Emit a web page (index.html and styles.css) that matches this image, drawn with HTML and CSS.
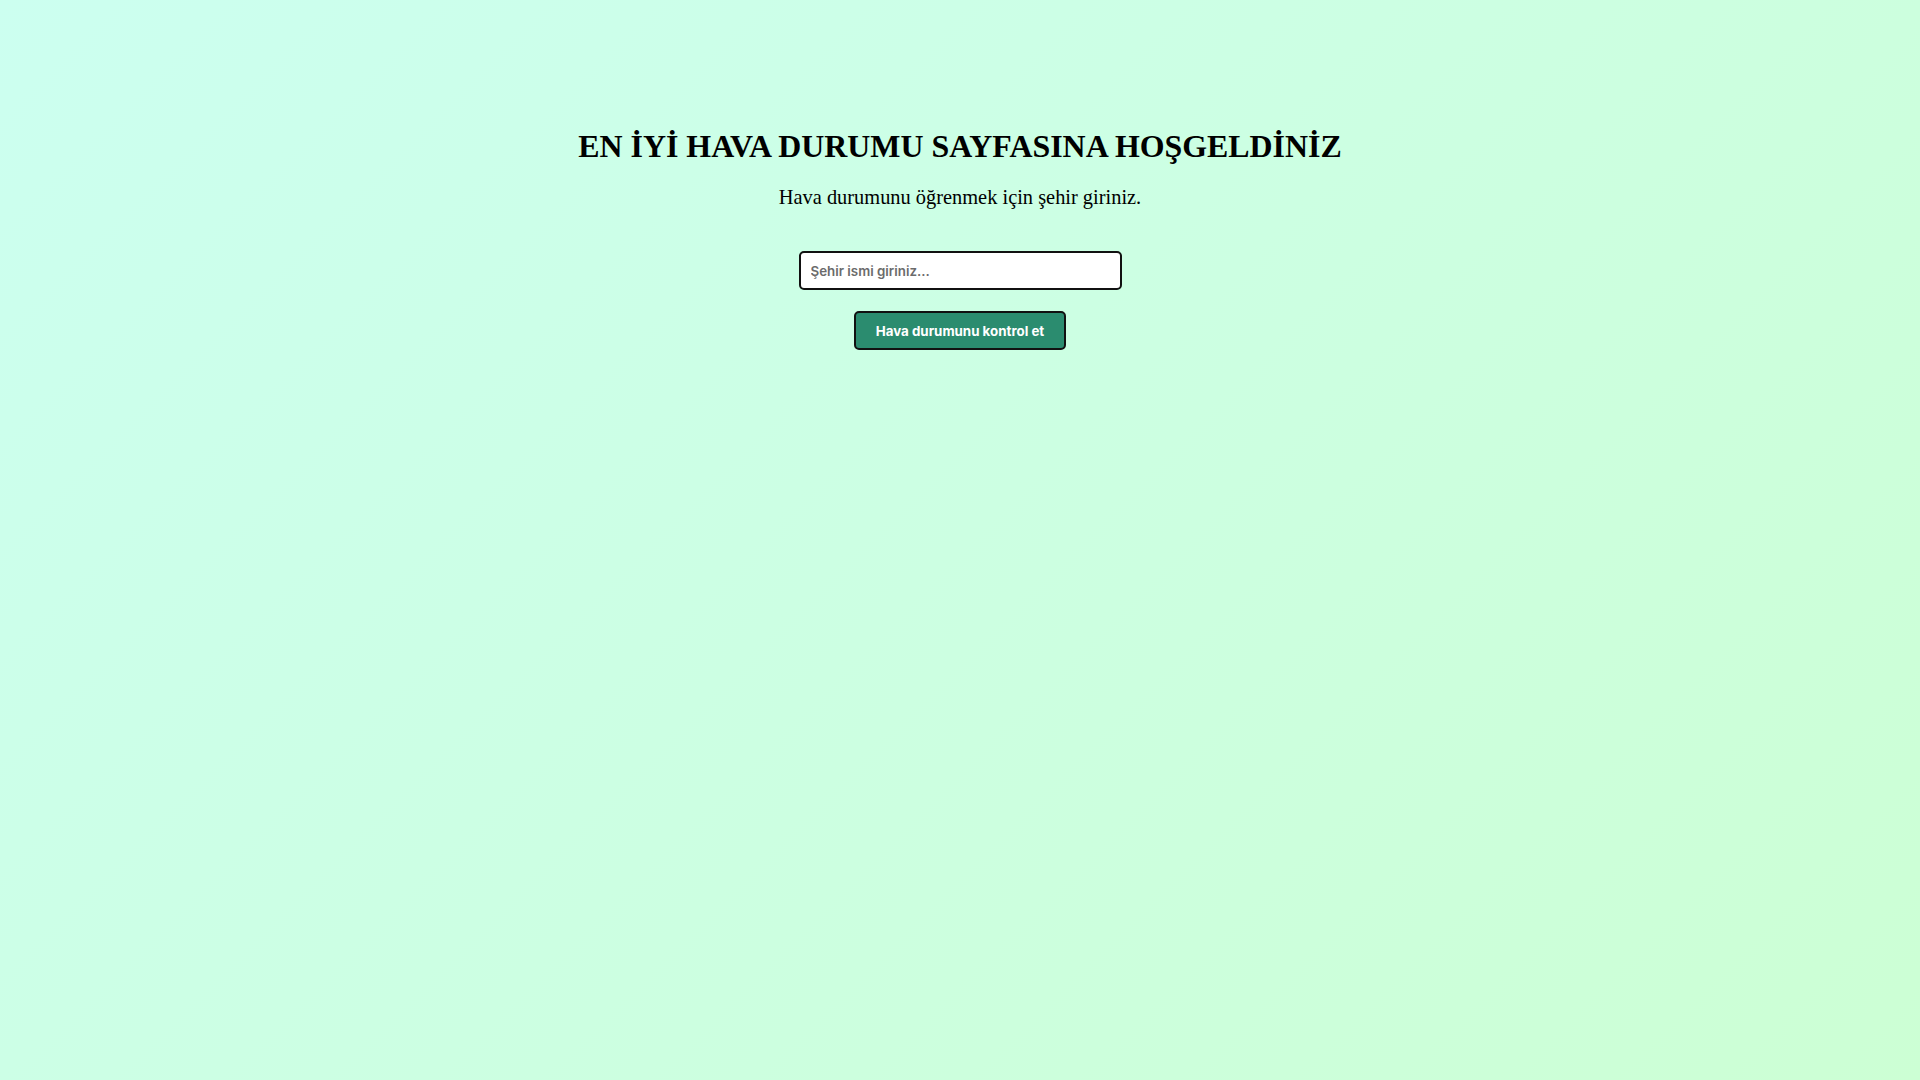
FILE: index.html
```html
<!DOCTYPE html>
<html lang="tr">
<head>
<meta charset="utf-8">
<title>Hava Durumu</title>
<link rel="stylesheet" href="styles.css">
</head>
<body>
<main class="page">
  <h1 class="title">EN İYİ HAVA DURUMU SAYFASINA HOŞGELDİNİZ</h1>
  <p class="subtitle">Hava durumunu öğrenmek için şehir giriniz.</p>
  <form class="search" onsubmit="return false;">
    <input class="city-input" type="text" placeholder="Şehir ismi giriniz...">
    <button class="check-btn" type="submit">Hava durumunu kontrol et</button>
  </form>
</main>
</body>
</html>
```

FILE: styles.css
```css
html, body {
  margin: 0;
  padding: 0;
  height: 100%;
}

body {
  background: linear-gradient(135deg, #ccfff0 0%, #ccffd4 100%);
  font-family: "Liberation Serif", "Times New Roman", serif;
  color: #000;
}

.page {
  display: flex;
  flex-direction: column;
  align-items: center;
  padding-top: 128px;
}

.title {
  margin: 0;
  font-family: "Liberation Serif", serif;
  font-weight: bold;
  font-size: 31.9px;
  line-height: 37px;
}

.subtitle {
  margin: 21px 0 0;
  font-size: 20.4px;
  line-height: 23px;
}

.search {
  display: flex;
  flex-direction: column;
  align-items: center;
  gap: 21px;
  margin-top: 42px;
}

.city-input {
  box-sizing: border-box;
  width: 323px;
  height: 39px;
  padding: 0 10px;
  border: 2px solid #111;
  border-radius: 5px;
  background: #fff;
  font-family: "Inter", sans-serif;
  font-size: 13.333px;
  font-weight: 600;
  color: #222;
  outline: none;
}

.city-input::placeholder {
  color: #6b6b6b;
  font-weight: 600;
}

.check-btn {
  box-sizing: border-box;
  height: 39px;
  padding: 0 20px;
  border: 2px solid #111;
  border-radius: 5px;
  background: #2b8c6f;
  color: #fff;
  font-family: "Inter", sans-serif;
  font-size: 13.333px;
  font-weight: 700;
  cursor: pointer;
}
```
